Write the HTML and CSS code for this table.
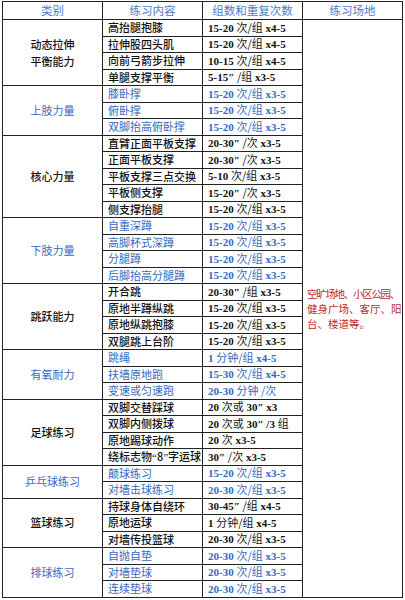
FILE: index.html
```html
<!DOCTYPE html>
<html lang="zh">
<head>
<meta charset="utf-8">
<link rel="stylesheet" href="styles.css">
</head>
<body>
<table class="plan">
  <colgroup><col class="c1"><col class="c2"><col class="c3"><col class="c4"></colgroup>
  <thead>
    <tr class="head"><th>类别</th><th>练习内容</th><th>组数和重复次数</th><th>练习场地</th></tr>
  </thead>
  <tbody>
    <tr><td class="cat" rowspan="4">动态拉伸<br>平衡能力</td><td class="item">高抬腿抱膝</td><td class="num">15-20 <span class="cn">次/组</span> x4-5</td>
      <td class="place" rowspan="35"><span class="l1">空旷场地、小区公园、</span><br>健身广场、客厅、阳<br>台、楼道等。</td></tr>
    <tr><td class="item">拉伸股四头肌</td><td class="num">15-20 <span class="cn">次/组</span> x4-5</td></tr>
    <tr><td class="item">向前弓箭步拉伸</td><td class="num">10-15 <span class="cn">次/组</span> x4-5</td></tr>
    <tr><td class="item">单腿支撑平衡</td><td class="num">5-15″ <span class="cn">/组</span> x3-5</td></tr>

    <tr class="blue"><td class="cat" rowspan="3">上肢力量</td><td class="item">膝卧撑</td><td class="num">15-20 <span class="cn">次/组</span> x3-5</td></tr>
    <tr class="blue"><td class="item">俯卧撑</td><td class="num">15-20 <span class="cn">次/组</span> x3-5</td></tr>
    <tr class="blue"><td class="item">双脚抬高俯卧撑</td><td class="num">15-20 <span class="cn">次/组</span> x3-5</td></tr>

    <tr><td class="cat" rowspan="5">核心力量</td><td class="item">直臂正面平板支撑</td><td class="num">20-30″ <span class="cn">/次</span> x3-5</td></tr>
    <tr><td class="item">正面平板支撑</td><td class="num">20-30″ <span class="cn">/次</span> x3-5</td></tr>
    <tr><td class="item">平板支撑三点交换</td><td class="num">5-10 <span class="cn">次/组</span> x3-5</td></tr>
    <tr><td class="item">平板侧支撑</td><td class="num">15-20″ <span class="cn">/次</span> x3-5</td></tr>
    <tr><td class="item">侧支撑抬腿</td><td class="num">15-20 <span class="cn">次/组</span> x3-5</td></tr>

    <tr class="blue"><td class="cat" rowspan="4">下肢力量</td><td class="item">自重深蹲</td><td class="num">15-20 <span class="cn">次/组</span> x3-5</td></tr>
    <tr class="blue"><td class="item">高脚杯式深蹲</td><td class="num">15-20 <span class="cn">次/组</span> x3-5</td></tr>
    <tr class="blue"><td class="item">分腿蹲</td><td class="num">15-20 <span class="cn">次/组</span> x3-5</td></tr>
    <tr class="blue"><td class="item">后脚抬高分腿蹲</td><td class="num">15-20 <span class="cn">次/组</span> x3-5</td></tr>

    <tr><td class="cat" rowspan="4">跳跃能力</td><td class="item">开合跳</td><td class="num">20-30″ <span class="cn">/组</span> x3-5</td></tr>
    <tr><td class="item">原地半蹲纵跳</td><td class="num">15-20 <span class="cn">次/组</span> x3-5</td></tr>
    <tr><td class="item">原地纵跳抱膝</td><td class="num">15-20 <span class="cn">次/组</span> x3-5</td></tr>
    <tr><td class="item">双腿跳上台阶</td><td class="num">15-20 <span class="cn">次/组</span> x3-5</td></tr>

    <tr class="blue"><td class="cat" rowspan="3">有氧耐力</td><td class="item">跳绳</td><td class="num">1 <span class="cn">分钟/组</span> x4-5</td></tr>
    <tr class="blue"><td class="item">扶墙原地跑</td><td class="num">15-30 <span class="cn">次/组</span> x4-5</td></tr>
    <tr class="blue"><td class="item">变速或匀速跑</td><td class="num">20-30 <span class="cn">分钟 /次</span></td></tr>

    <tr><td class="cat" rowspan="4">足球练习</td><td class="item">双脚交替踩球</td><td class="num">20 <span class="cn">次或</span> 30″ x3</td></tr>
    <tr><td class="item">双脚内侧拨球</td><td class="num">20 <span class="cn">次或</span> 30″ /3 <span class="cn">组</span></td></tr>
    <tr><td class="item">原地踢球动作</td><td class="num">20 <span class="cn">次</span> x3-5</td></tr>
    <tr><td class="item">绕标志物<span class="q">“</span>8<span class="q">”</span>字运球</td><td class="num">30″ <span class="cn">/次</span> x3-5</td></tr>

    <tr class="blue"><td class="cat" rowspan="2">乒乓球练习</td><td class="item">颠球练习</td><td class="num">15-20 <span class="cn">次/组</span> x3-5</td></tr>
    <tr class="blue"><td class="item">对墙击球练习</td><td class="num">20-30 <span class="cn">次/组</span> x3-5</td></tr>

    <tr><td class="cat" rowspan="3">篮球练习</td><td class="item">持球身体自绕环</td><td class="num">30-45″ <span class="cn">/组</span> x4-5</td></tr>
    <tr><td class="item">原地运球</td><td class="num">1 <span class="cn">分钟/组</span> x4-5</td></tr>
    <tr><td class="item">对墙传投篮球</td><td class="num">20-30 <span class="cn">次/组</span> x3-5</td></tr>

    <tr class="blue"><td class="cat" rowspan="3">排球练习</td><td class="item">自抛自垫</td><td class="num">20-30 <span class="cn">次/组</span> x3-5</td></tr>
    <tr class="blue"><td class="item">对墙垫球</td><td class="num">20-30 <span class="cn">次/组</span> x3-5</td></tr>
    <tr class="blue"><td class="item">连续垫球</td><td class="num">20-30 <span class="cn">次/组</span> x3-5</td></tr>
  </tbody>
</table>
</body>
</html>
```
FILE: styles.css
```css
html, body {
  margin: 0;
  padding: 0;
  background: #ffffff;
}
body {
  padding: 1px 0 0 2px;
  font-family: "Noto Sans CJK SC", sans-serif;
  color: #111111;
}
.plan {
  border-collapse: collapse;
  table-layout: fixed;
  width: 400px;
  border: 1px solid #111111;
}
.c1, .c2, .c3, .c4 { width: 100px; }
.plan th, .plan td {
  border: 1px solid #222222;
  padding: 0;
  height: 15.5px;
  line-height: 11px;
  font-size: 11px;
  white-space: nowrap;
  overflow: hidden;
}
.head th {
  height: 17px;
  font-weight: normal;
  font-size: 11.5px;
  color: #4a7bc8;
  text-align: center;
}
.cat {
  text-align: center;
  vertical-align: middle;
  line-height: 17px !important;
  font-weight: 500;
}
.item {
  text-align: left;
  padding-left: 5px !important;
  font-weight: 500;
}
.blue .cat, .blue .item { font-weight: normal; }
.q {
  font-family: "Liberation Serif", serif;
}
.num {
  text-align: left;
  padding-left: 5px !important;
  font-family: "Liberation Serif", "Noto Sans CJK SC", serif;
  font-weight: bold;
}
.cn {
  font-family: "Noto Sans CJK SC", sans-serif;
  font-weight: normal;
}
.blue td { color: #3569c0; }
.place {
  vertical-align: middle;
  color: #c0282d;
  font-size: 10.5px !important;
  line-height: 15px !important;
  padding-left: 4px !important;
}
.l1 { letter-spacing: -1.3px; }
```
